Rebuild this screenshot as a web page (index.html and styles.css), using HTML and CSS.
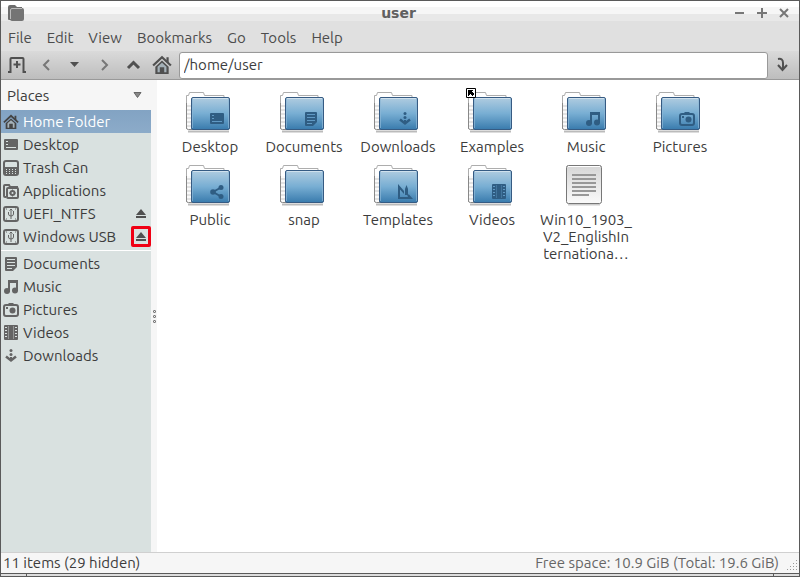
FILE: index.html
```html
<!DOCTYPE html>
<html lang="en">
<head>
<meta charset="utf-8">
<title>user</title>
<link rel="stylesheet" href="styles.css">
</head>
<body>
<svg class="defs" aria-hidden="true">
  <defs>
    <linearGradient id="blue" x1="0" y1="0" x2="0" y2="1"><stop offset="0" stop-color="#b0cce0"/><stop offset=".5" stop-color="#78aed3"/><stop offset="1" stop-color="#397bad"/></linearGradient>
    <linearGradient id="paper" x1="0" y1="0" x2="0" y2="1"><stop offset="0" stop-color="#d6d6d6"/><stop offset="1" stop-color="#fafafa"/></linearGradient>
    <pattern id="sheets" width="4" height="4" patternUnits="userSpaceOnUse"><path fill="#fafafa" d="M0 0h4v4H0z"/><path fill="#e2e2e2" d="M0 2h4v2H0z"/></pattern>
  </defs>
  <symbol id="folder" viewBox="0 0 46 42">
    <path d="M3 40.500h41" stroke="#bbb" stroke-width="2"/>
    <path d="M1.500 38V4.500h2l1-3h14l1 3h19.500V9" fill="#fff" stroke="#adadad"/>
    <path d="M2 12h4v26H2z" fill="url(#sheets)"/>
    <path d="M1.500 12v25q0 1.500 2 1.500h4" fill="none" stroke="#888"/>
    <rect x="6.500" y="6.500" width="38" height="32" rx="1.500" fill="url(#blue)" stroke="#365b83"/>
    <path d="M8 7.500h35" stroke="#d0e1ed"/>
    <path d="M7.500 8v29M43.500 8v29" stroke="#8db8d7" opacity=".7"/>
  </symbol>
  <symbol id="home" viewBox="0 0 18 18"><path d="M1 9.500L9 2l8 7.500" fill="none" stroke="currentColor" stroke-width="2"/><path d="M13 2h2v5l-2-2zM3 10.500L9 5l6 5.500V17H3z" fill="currentColor"/><path d="M5 10.500L9 7l4 3.500v5h-2V11H7v4.500H5z" fill="#a5b1b8"/></symbol>
  <symbol id="desktop" viewBox="0 0 16 16"><path fill="currentColor" d="M2 2h12q1 0 1 1v9q0 1-1 1H2q-1 0-1-1V3q0-1 1-1z"/><path fill="none" stroke="var(--hole)" d="M3 4.500h2M3 7.500h2M3 10.500h10"/></symbol>
  <symbol id="trash" viewBox="0 0 16 16"><rect x="1" y="1" width="14" height="14" rx="2" fill="none" stroke="currentColor" stroke-width="2"/><path fill="currentColor" d="M1 7h14v8H1z"/><path stroke="var(--hole)" stroke-dasharray="1 2" d="M3 9.500h11M3 11.500h11M3 13.500h11"/></symbol>
  <symbol id="apps" viewBox="0 0 16 16"><path d="M3 14H2q-1 0-1-1V3q0-1 1-1h4l1 2h7v1" fill="none" stroke="currentColor" stroke-width="2"/><rect x="4" y="5" width="11" height="10" rx="1" fill="none" stroke="currentColor" stroke-width="2"/><circle cx="9.500" cy="10" r="2" fill="none" stroke="currentColor" stroke-width="2"/><path d="M9.500 6.500v1.500M9.500 12v1.500M6 10h1.500M11.500 10H13" stroke="currentColor"/></symbol>
  <symbol id="usb" viewBox="0 0 16 16"><rect x="1" y="1" width="14" height="14" rx="2" fill="none" stroke="currentColor" stroke-width="2"/><path d="M8 3v10M5.500 6v2q0 2 2.500 2 2.500 0 2.500-2V5M6.500 4.500L8 3l1.500 1.500" fill="none" stroke="currentColor"/><path d="M3 3h1M12 3h1M3 13h1M12 13h1" stroke="currentColor"/></symbol>
  <symbol id="docs" viewBox="0 0 16 16"><path fill="currentColor" d="M3 1h10q1 0 1 1v9l-4 4H3q-1 0-1-1V2q0-1 1-1z"/><path stroke="var(--hole)" d="M4 3.500h8M4 6.500h8M4 9.500h8M4 12.500h5"/></symbol>
  <symbol id="music" viewBox="0 0 16 16"><path fill="currentColor" d="M5 1h10v11h-2V4H7v9H5z"/><circle cx="4" cy="12" r="3" fill="currentColor"/><circle cx="12" cy="11.500" r="3" fill="currentColor"/></symbol>
  <symbol id="pictures" viewBox="0 0 16 16"><rect x="1" y="3" width="14" height="11" rx="2" fill="none" stroke="currentColor" stroke-width="2"/><path fill="currentColor" d="M5 2l1-1h4l1 1v2H5zM3 5h2v2H3z"/><circle cx="9.500" cy="8.500" r="3" fill="currentColor"/></symbol>
  <symbol id="videos" viewBox="0 0 16 16"><rect x="1" y="0" width="14" height="15" rx="1" fill="currentColor"/><path stroke="var(--hole)" stroke-width="2" stroke-dasharray="1 2" d="M3 2v12M13 2v12"/><path stroke="var(--hole)" opacity=".4" d="M5.500 1v13M10.500 1v13"/></symbol>
  <symbol id="downloads" viewBox="0 0 16 16"><circle cx="8" cy="2.500" r="1.500" fill="currentColor"/><circle cx="8" cy="6.500" r="1.500" fill="currentColor"/><path d="M3 8.500l5 4 5-4" fill="none" stroke="currentColor" stroke-width="2.500"/><path fill="currentColor" d="M7 9h2v4H7z"/></symbol>
  <symbol id="share" viewBox="0 0 16 16"><path d="M12 3.500L4 8l8 4.500" fill="none" stroke="currentColor" stroke-width="2"/><circle cx="12" cy="3.500" r="2.500" fill="currentColor"/><circle cx="4" cy="8" r="2.800" fill="currentColor"/><circle cx="12" cy="12.500" r="2.500" fill="currentColor"/></symbol>
  <symbol id="templates" viewBox="0 0 16 16"><path d="M1 0v15h15l-4-4.500-2 0 1 2.500H3V5.500l4 4.500V7z" fill="currentColor"/><path d="M8 5l1.500-4L11 5v6H8z" fill="currentColor"/></symbol>
  <symbol id="eject" viewBox="0 0 12 12"><path fill="currentColor" d="M6 1l5 6H1zM1 8h10v2H1z"/></symbol>
</svg>

<div class="window">
  <header class="titlebar">
    <svg class="app-icon" viewBox="0 0 18 18"><path fill="#6c6c6c" d="M3 1h5l2 2h5v4H5v9H2q-1 0-1-1V3q0-2 2-2z"/><rect x="3" y="4" width="14" height="13" rx="2" fill="#747474"/><path d="M3.500 15V6q0-1.500 1.500-1.500h10" stroke="#bbb" fill="none"/></svg>
    <h1>user</h1>
    <div class="controls">
      <button aria-label="Minimize"><svg viewBox="0 0 12 12"><path d="M1 6h9"/></svg></button>
      <button aria-label="Maximize"><svg viewBox="0 0 12 12"><path d="M1 6h10M6 1v10"/></svg></button>
      <button aria-label="Close"><svg viewBox="0 0 12 12"><path d="M2 2l8 8M10 2l-8 8"/></svg></button>
    </div>
  </header>
  <nav class="menubar" aria-label="Menu">
    <button>File</button><button>Edit</button><button>View</button><button>Bookmarks</button><button>Go</button><button>Tools</button><button>Help</button>
  </nav>
  <div class="toolbar">
    <button aria-label="New tab"><svg viewBox="0 0 20 20"><path d="M1 17h2.500V4q0-1 1-1h11q1 0 1 1v13H19M10 6v7M6.500 9.500h7" fill="none" stroke="currentColor" stroke-width="2"/></svg></button>
    <button aria-label="Back"><svg class="dim" viewBox="0 0 20 20"><path d="M13 5l-5 5 5 5" fill="none" stroke="currentColor" stroke-width="2"/></svg></button>
    <button aria-label="History"><svg viewBox="0 0 20 20"><path d="M5 7h9l-4.500 5z" fill="currentColor"/></svg></button>
    <button aria-label="Forward"><svg class="dim" viewBox="0 0 20 20"><path d="M8 5l5 5-5 5" fill="none" stroke="currentColor" stroke-width="2"/></svg></button>
    <button aria-label="Up"><svg viewBox="0 0 20 20"><path d="M5 13l5.500-5.500L16 13" fill="none" stroke="currentColor" stroke-width="3"/></svg></button>
    <button aria-label="Home"><svg><use href="#home"/></svg></button>
    <input type="text" aria-label="Location" value="/home/user">
    <button aria-label="Go to location"><svg viewBox="0 0 20 20"><path d="M5 4q5-1 5 4v7M5 10l4.500 5L14 10" fill="none" stroke="currentColor" stroke-width="2"/></svg></button>
  </div>
  <main class="content">
    <aside class="sidebar">
      <button class="places">Places<svg viewBox="0 0 9 6"><path d="M1 .500h7L4.500 5.500z" fill="#888" stroke="#666"/></svg></button>
      <ul>
        <li class="selected"><a href="#"><svg><use href="#home"/></svg>Home Folder</a></li>
        <li><a href="#"><svg><use href="#desktop"/></svg>Desktop</a></li>
        <li><a href="#"><svg><use href="#trash"/></svg>Trash Can</a></li>
        <li><a href="#"><svg><use href="#apps"/></svg>Applications</a></li>
        <li><a href="#"><svg><use href="#usb"/></svg>UEFI_NTFS</a><button class="eject" aria-label="Eject UEFI_NTFS"><svg><use href="#eject"/></svg></button></li>
        <li><a href="#"><svg><use href="#usb"/></svg>Windows USB</a><button class="eject marked" aria-label="Eject Windows USB"><svg><use href="#eject"/></svg></button></li>
      </ul>
      <hr>
      <ul>
        <li><a href="#"><svg><use href="#docs"/></svg>Documents</a></li>
        <li><a href="#"><svg><use href="#music"/></svg>Music</a></li>
        <li><a href="#"><svg><use href="#pictures"/></svg>Pictures</a></li>
        <li><a href="#"><svg><use href="#videos"/></svg>Videos</a></li>
        <li><a href="#"><svg><use href="#downloads"/></svg>Downloads</a></li>
      </ul>
    </aside>
    <div class="splitter"><i></i><i></i><i></i></div>
    <ul class="files">
      <li><span class="icon"><svg><use href="#folder"/></svg><svg class="emblem"><use href="#desktop"/></svg></span>Desktop</li>
      <li><span class="icon"><svg><use href="#folder"/></svg><svg class="emblem"><use href="#docs"/></svg></span>Documents</li>
      <li><span class="icon"><svg><use href="#folder"/></svg><svg class="emblem"><use href="#downloads"/></svg></span>Downloads</li>
      <li><span class="icon"><svg><use href="#folder"/></svg><svg class="shortcut" viewBox="0 0 10 10"><path fill="#fff" stroke="#000" d="M.500 .500h9v9h-9z"/><path d="M2 2h5v1H6v1h1v1h1v2H7v1H6V7H5V6H4v1H3V8H2z"/></svg></span>Examples</li>
      <li><span class="icon"><svg><use href="#folder"/></svg><svg class="emblem"><use href="#music"/></svg></span>Music</li>
      <li><span class="icon"><svg><use href="#folder"/></svg><svg class="emblem"><use href="#pictures"/></svg></span>Pictures</li>
      <li><span class="icon"><svg><use href="#folder"/></svg><svg class="emblem"><use href="#share"/></svg></span>Public</li>
      <li><span class="icon"><svg><use href="#folder"/></svg></span>snap</li>
      <li><span class="icon"><svg><use href="#folder"/></svg><svg class="emblem"><use href="#templates"/></svg></span>Templates</li>
      <li><span class="icon"><svg><use href="#folder"/></svg><svg class="emblem"><use href="#videos"/></svg></span>Videos</li>
      <li><span class="icon"><svg viewBox="0 0 46 42"><path d="M7 40.500h32" stroke="#ccc" stroke-width="2"/><rect x="5.500" y="1.500" width="35" height="38" rx="2" fill="url(#paper)" stroke="#777"/><path d="M7 2.500h32" stroke="#fff"/><path d="M11 11h24M11 15h24M11 19h24M11 23h24M11 27h24M11 31h17" stroke="#989898" stroke-width="2"/></svg></span>Win10_1903_<br>V2_EnglishIn<br>ternationa…</li>
    </ul>
  </main>
  <footer class="statusbar">
    <span>11 items (29 hidden)</span>
    <span class="free">Free space: 10.9 GiB (Total: 19.6 GiB)</span>
    <svg class="grip" viewBox="0 0 12 12"><path stroke="#999" stroke-dasharray="1 2" d="M9 1.500h3M6 4.500h6M3 7.500h9M0 10.500h12"/></svg>
  </footer>
  <div class="frame-bottom"></div>
</div>
</body>
</html>
```
FILE: styles.css
```css
* { box-sizing: border-box; }
body {
  margin: 0;
  font: 15px/17px "Ubuntu", "Noto Sans", sans-serif;
  color: #3c3c3c;
}
button {
  font: inherit;
  color: inherit;
  border: 0;
  padding: 0;
  background: none;
}
ul { list-style: none; margin: 0; padding: 0; }
svg { display: block; }
.defs { position: absolute; width: 0; height: 0; }

.window {
  display: flex;
  flex-direction: column;
  min-height: 100vh;
  border: 1px solid #5a5a5a;
  border-bottom: 0;
}

.titlebar {
  display: grid;
  grid-template-columns: 1fr auto 1fr;
  align-items: center;
  height: 20px;
  padding: 3px 9px 0 6px;
  background: linear-gradient(#fff 0 6px, #f6f6f6 6px 13px, #e8e8e8 13px);
}
.app-icon { width: 18px; height: 18px; }
.titlebar h1 {
  margin: 0;
  font: bold 14px/18px "DejaVu Sans", sans-serif;
  color: #606060;
}
.controls { display: flex; justify-content: flex-end; gap: 10px; }
.controls svg {
  width: 12px;
  height: 12px;
  fill: none;
  stroke: #777;
  stroke-width: 2;
}

.menubar {
  display: flex;
  gap: 15px;
  height: 30px;
  padding: 3px 7px 0;
  background: #e0e0e0;
  color: #4c4c4c;
}
.menubar button { height: 26px; }

.toolbar {
  display: flex;
  align-items: center;
  height: 29px;
  padding: 0 2px 0 1px;
  background: linear-gradient(#dadada, #bdbdbd);
  border-bottom: 1px solid #999;
  color: #505050;
}
.toolbar button {
  display: flex;
  justify-content: center;
  width: 29px;
}
.toolbar svg { width: 20px; height: 20px; }
.toolbar .dim { color: #777; }
.toolbar input {
  flex: 1;
  min-width: 0;
  height: 27px;
  margin-left: 3px;
  padding: 0 4px 2px;
  border: 1px solid #999;
  border-radius: 3px;
  background: #fff;
  font: inherit;
  color: #3c3c3c;
}

.content { display: flex; flex: 1; }
.sidebar { width: 150px; background: #d9e1e0; --hole: #d9e1e0; }
.places {
  display: flex;
  align-items: center;
  justify-content: space-between;
  width: 100%;
  height: 30px;
  padding: 0 9px 0 6px;
  background: #f6f6f6;
}
.places svg { width: 9px; height: 6px; }
.sidebar li { display: flex; align-items: center; height: 23px; }
.sidebar a {
  display: flex;
  flex: 1;
  align-items: center;
  gap: 4px;
  padding-left: 2px;
  color: inherit;
  text-decoration: none;
}
.sidebar a svg { width: 16px; height: 16px; color: #646464; }
.sidebar .selected { background: linear-gradient(#82a3c3, #8cabc9); color: #fff; }
.sidebar .selected svg { color: #444; }
.eject {
  display: grid;
  place-items: center;
  width: 20px;
  height: 21px;
  border: 3px solid transparent;
  color: #505050;
}
.eject.marked { border-color: #f00014; border-radius: 2px; }
.eject svg { width: 12px; height: 12px; }
.sidebar hr { margin: 2px 0 1px; height: 1px; border: 0; background: #fff; }

.splitter {
  display: flex;
  flex-direction: column;
  align-items: center;
  justify-content: center;
  gap: 2px;
  width: 6px;
  background: #f6f6f6;
}
.splitter i { width: 3px; height: 3px; border: 1px solid #777; border-radius: 1px; }

.files {
  display: grid;
  flex: 1;
  grid-template-columns: repeat(auto-fill, 94px);
  align-content: start;
  row-gap: 9px;
  padding: 11px 6px;
  background: #fff;
}
.files li { text-align: center; white-space: nowrap; }
.icon {
  position: relative;
  display: block;
  width: 50px;
  height: 47px;
  margin: 0 auto;
}
.icon svg { width: 46px; height: 42px; }
.icon .emblem {
  position: absolute;
  right: 10px;
  bottom: 11px;
  width: 16px;
  height: 16px;
  color: #2f5d83;
  --hole: #6099c4;
}
.icon .shortcut { position: absolute; left: -1px; top: -3px; width: 10px; height: 10px; }

.statusbar {
  display: flex;
  align-items: center;
  height: 21px;
  padding: 0 0 2px 2px;
  border-top: 1px solid #d0d0d0;
  background: #f6f6f6;
}
.free { margin-left: auto; color: #666; }
.grip { align-self: flex-end; width: 12px; height: 12px; margin-left: 8px; }
.frame-bottom {
  height: 4px;
  border: solid #5a5a5a;
  border-width: 1px 0;
  background: linear-gradient(#5a5a5a, #5a5a5a) 25px 0 / 1px 2px no-repeat, linear-gradient(#5a5a5a, #5a5a5a) right 25px top 0 / 1px 2px no-repeat, #ddd;
}
```
